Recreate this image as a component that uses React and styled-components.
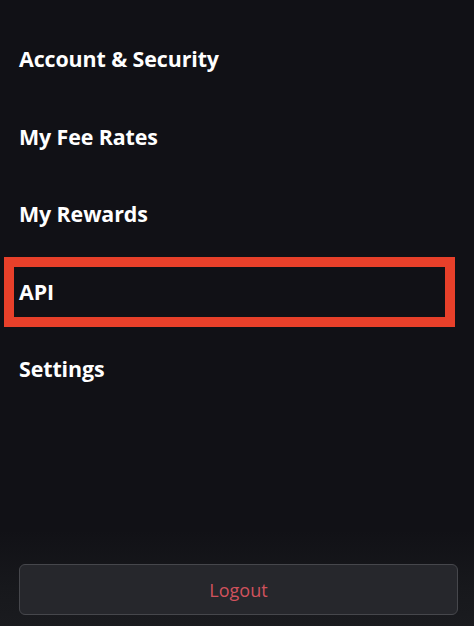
import React from 'react'
import styled, { createGlobalStyle } from 'styled-components'

const GlobalStyle = createGlobalStyle`
  html, body {
    margin: 0;
    padding: 0;
    background: #111116;
  }
  #root {
    min-height: 100vh;
  }
`

const Screen = styled.div`
  min-height: 100vh;
  display: flex;
  flex-direction: column;
  background: #111116;
  font-family: "Open Sans", "Noto Sans", sans-serif;
`

const Menu = styled.ul`
  list-style: none;
  margin: 0;
  padding: 20px 0 0;
`

const Item = styled.li`
  position: relative;
  height: 77.5px;
  display: flex;
  align-items: center;
  padding: 0 19px;
  color: #ffffff;
  font-size: 21.4px;
  font-weight: 700;
  letter-spacing: -0.1px;

  ${(p) => p.$marked && `
    &::after {
      content: '';
      position: absolute;
      left: 4px;
      right: 19px;
      top: 4px;
      bottom: 3px;
      border: 10px solid #e8402a;
    }
  `}
`

const Footer = styled.div`
  margin-top: auto;
  padding: 34px 16px 11px 19px;
  background: linear-gradient(to bottom, #111116 0%, #17181c 60%, #1a1b1f 100%);
`

const LogoutButton = styled.button`
  width: 100%;
  height: 51px;
  border: 1px solid #46474c;
  border-radius: 6px;
  background: #26272c;
  color: #d0525d;
  font-family: "Open Sans", "Noto Sans", sans-serif;
  font-size: 18px;
  font-weight: 400;
  cursor: pointer;
`

const items = ['Account & Security', 'My Fee Rates', 'My Rewards', 'API', 'Settings']

export default function App() {
  return (
    <>
      <GlobalStyle />
      <Screen>
        <Menu>
          {items.map((label) => (
            <Item key={label} $marked={label === 'API'}>{label}</Item>
          ))}
        </Menu>
        <Footer>
          <LogoutButton>Logout</LogoutButton>
        </Footer>
      </Screen>
    </>
  )
}
